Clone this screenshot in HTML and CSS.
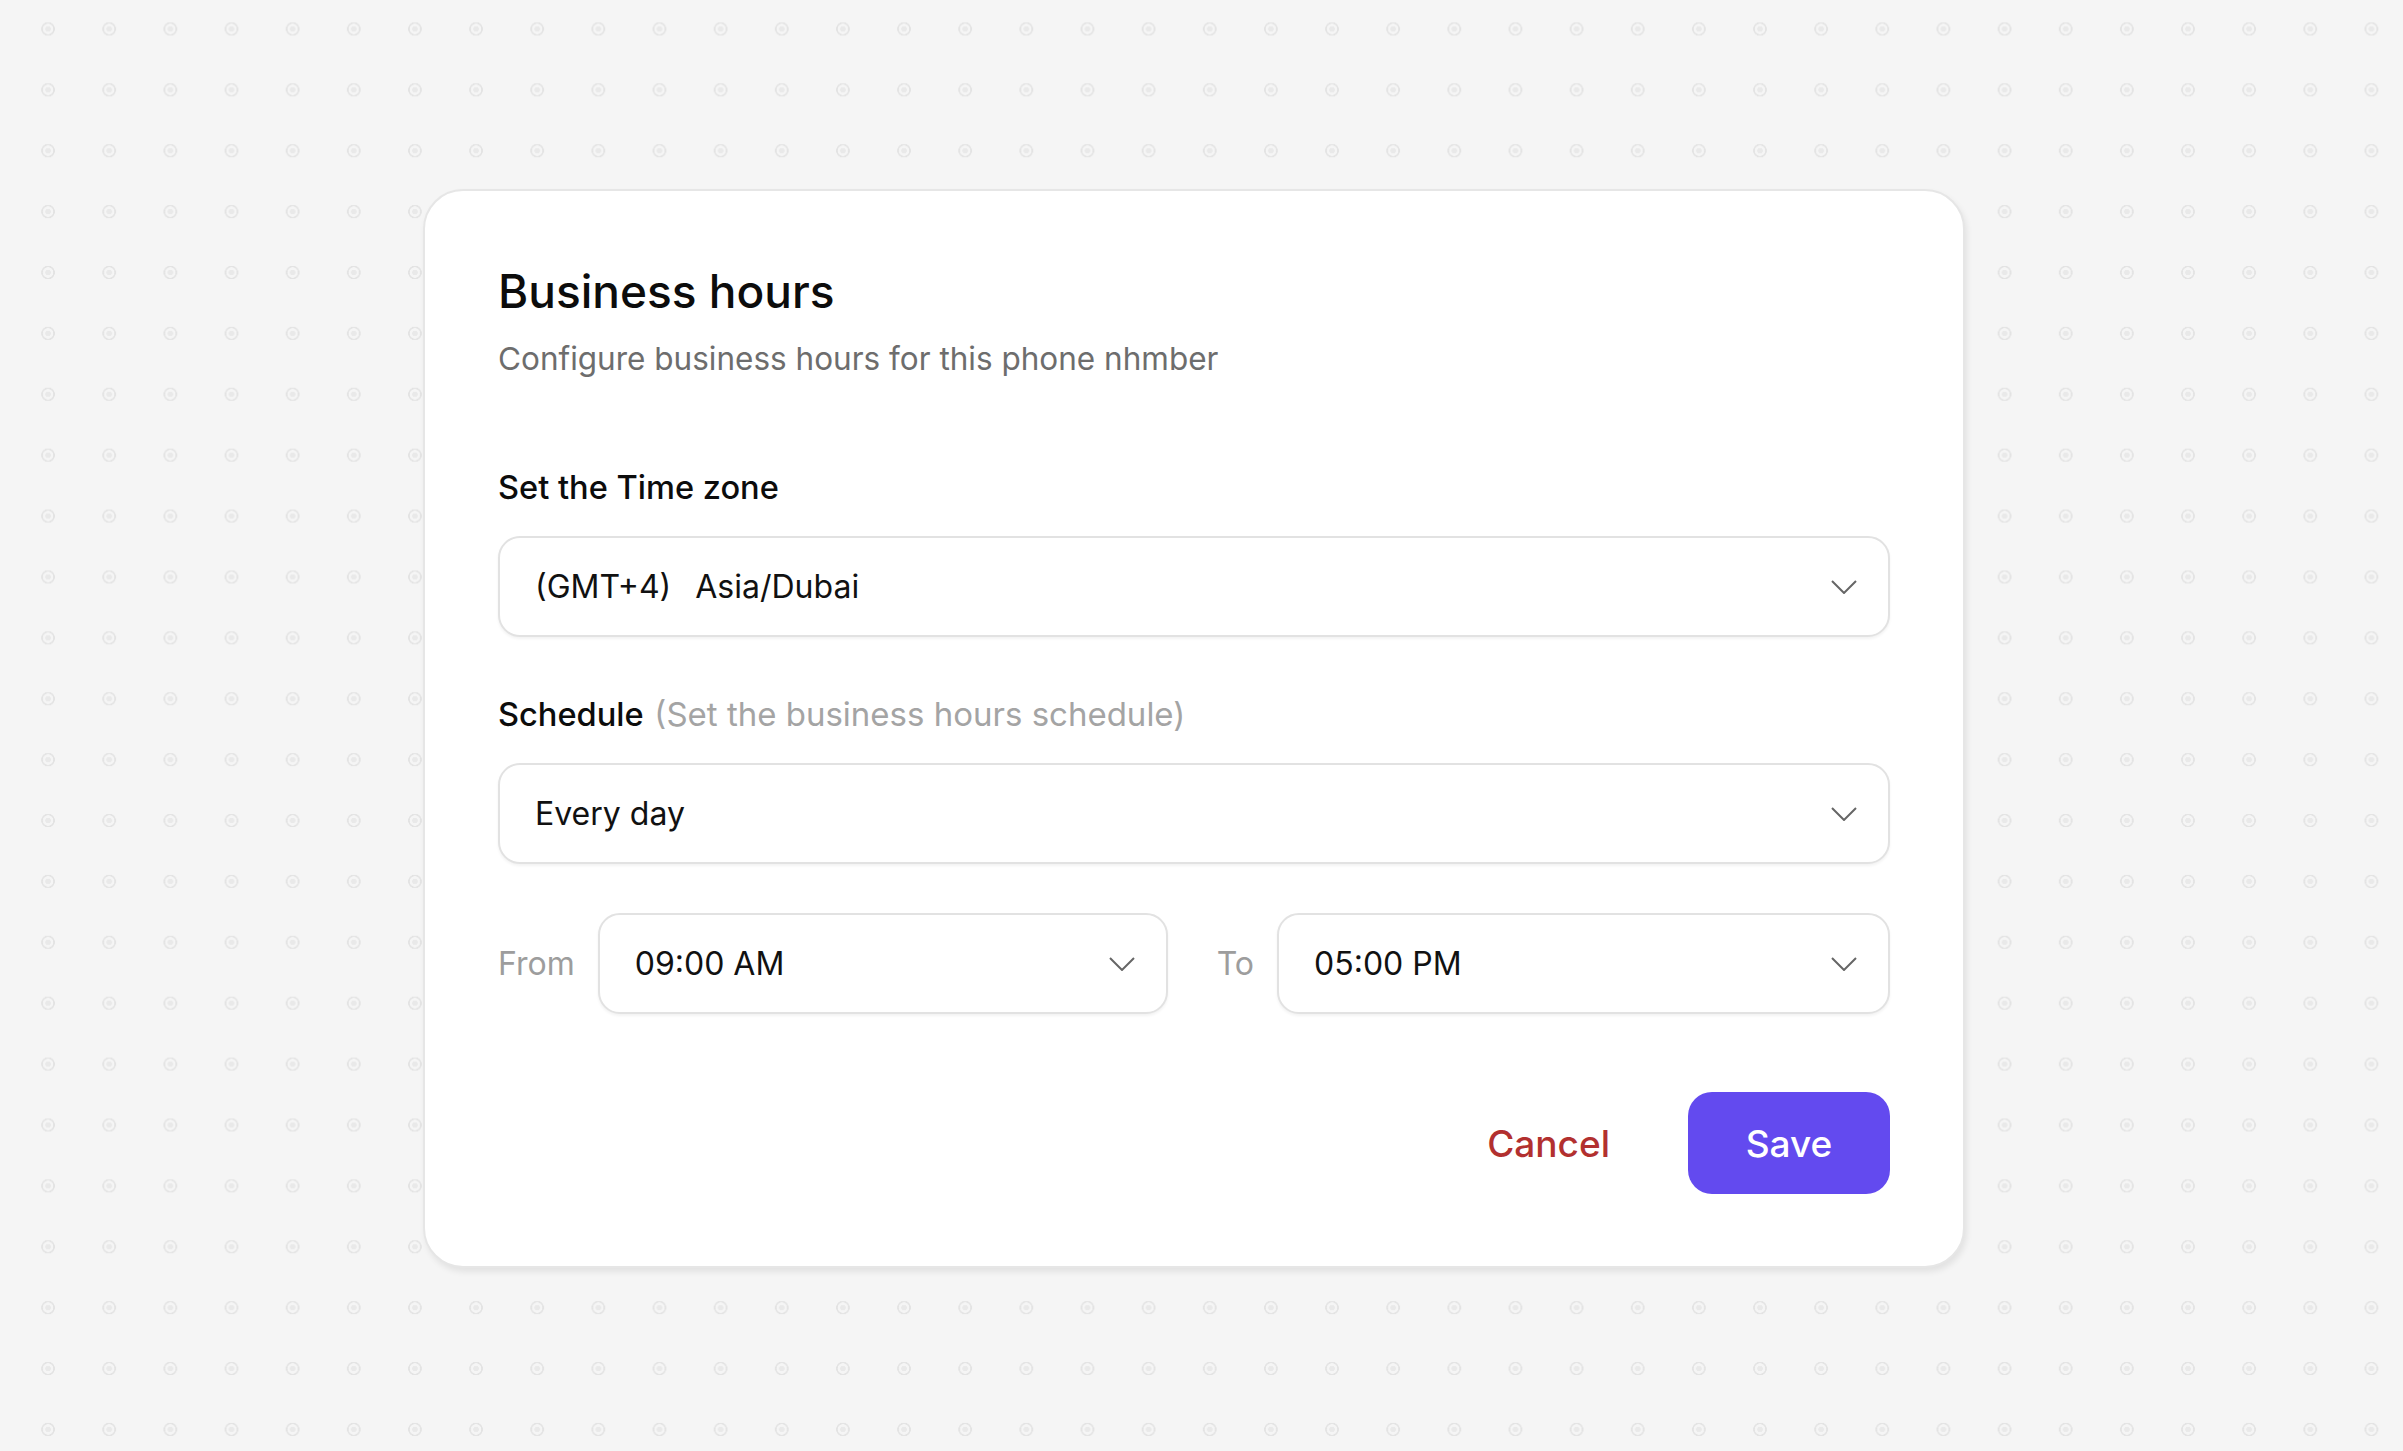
FILE: index.html
```html
<!DOCTYPE html>
<html lang="en">
<head>
    <meta charset="UTF-8">
    <meta name="viewport" content="width=device-width, initial-scale=1.0">
    <title>Business hours</title>
    <link rel="stylesheet" href="styles.css">
</head>
<body>
    <div class="page">
        <!-- Tarjeta de configuración del horario -->
        <div class="card">
            <h1 class="title">Business hours</h1>
            <p class="subtitle">Configure business hours for this phone nhmber</p>

            <div class="field-label first">Set the Time zone</div>
            <div class="select">
                <span class="value"><span class="offset">(GMT+4)</span>Asia/Dubai</span>
                <svg class="chevron" width="26" height="14" viewBox="0 0 26 14"><polyline points="1,1 13,13 25,1" /></svg>
            </div>

            <div class="field-label">Schedule <span class="hint">(Set the business hours schedule)</span></div>
            <div class="select">
                <span class="value">Every day</span>
                <svg class="chevron" width="26" height="14" viewBox="0 0 26 14"><polyline points="1,1 13,13 25,1" /></svg>
            </div>

            <div class="time-row">
                <span class="time-label">From</span>
                <div class="select from">
                    <span class="value">09:00 AM</span>
                    <svg class="chevron" width="26" height="14" viewBox="0 0 26 14"><polyline points="1,1 13,13 25,1" /></svg>
                </div>
                <span class="time-label to">To</span>
                <div class="select until">
                    <span class="value">05:00 PM</span>
                    <svg class="chevron" width="26" height="14" viewBox="0 0 26 14"><polyline points="1,1 13,13 25,1" /></svg>
                </div>
            </div>

            <div class="actions">
                <button class="cancel-button">Cancel</button>
                <button class="save-button">Save</button>
            </div>
        </div>
    </div>
</body>
</html>
```

FILE: styles.css
```css
body {
    font-family: Inter, "Noto Sans", sans-serif;
    margin: 0;
    min-height: 100vh;
    background-color: #f5f5f5;
    /* patrón de circulitos del fondo */
    background-image:
        radial-gradient(circle, #e9e9e9 0 2.5px, transparent 3px),
        radial-gradient(circle, transparent 0 5px, #e3e3e3 5.5px 6.5px, transparent 7px);
    background-size: 61.15px 60.9px;
    background-position: 17.5px -1.5px;
    color: #111;
}
.page {
    padding: 189px 0 0 423px;
}
.card {
    box-sizing: border-box;
    width: 1542px;
    height: 1079px;
    padding: 72px 73px 0 73px;
    background-color: #fff;
    border: 2px solid #e6e6e6;
    border-radius: 40px;
    box-shadow: 2px 4px 6px rgba(0, 0, 0, 0.08);
}
.title {
    margin: 0;
    font-size: 46px;
    line-height: 56px;
    font-weight: 500;
    color: #0c0c0c;
}
.subtitle {
    margin: 20px 0 0 0;
    font-size: 31.5px;
    line-height: 40px;
    color: #6d6d6d;
}
.field-label {
    margin-top: 57px;
    font-size: 32.6px;
    line-height: 40px;
    font-weight: 500;
    color: #0c0c0c;
}
.field-label.first {
    margin-top: 88px;
}
.field-label .hint {
    font-size: 33px;
    font-weight: 400;
    color: #a4a4a4;
    margin-left: 2px;
}
.select {
    box-sizing: border-box;
    display: flex;
    align-items: center;
    justify-content: space-between;
    height: 101px;
    margin-top: 29px;
    padding: 0 31px 0 35px;
    border: 2px solid #e2e2e2;
    border-radius: 22px;
    box-shadow: 0 2px 3px rgba(0, 0, 0, 0.05);
    background-color: #fff;
}
.select .value {
    font-size: 32px;
    color: #111;
}
.select .offset {
    margin-right: 24px;
}
.chevron polyline {
    fill: none;
    stroke: #666;
    stroke-width: 2;
}
.time-row {
    display: flex;
    align-items: center;
    gap: 23px;
    margin-top: 49px;
}
.time-row .select {
    margin-top: 0;
}
.time-label {
    font-size: 32px;
    color: #9d9d9d;
}
.time-label.to {
    margin-left: 26px;
}
.select.from {
    width: 570px;
}
.select.until {
    flex-grow: 1;
}
.actions {
    display: flex;
    justify-content: flex-end;
    align-items: center;
    gap: 78px;
    margin-top: 78px;
}
.cancel-button {
    font-family: inherit;
    font-size: 37px;
    font-weight: 500;
    color: #b2302f;
    background: none;
    border: none;
    padding: 0;
    cursor: pointer;
}
.save-button {
    font-family: inherit;
    width: 202px;
    height: 102px;
    font-size: 37px;
    font-weight: 500;
    color: #fff;
    background-color: #634aef;
    border: none;
    border-radius: 24px;
    cursor: pointer;
}
.save-button:hover {
    background-color: #5239dc;
}
```
